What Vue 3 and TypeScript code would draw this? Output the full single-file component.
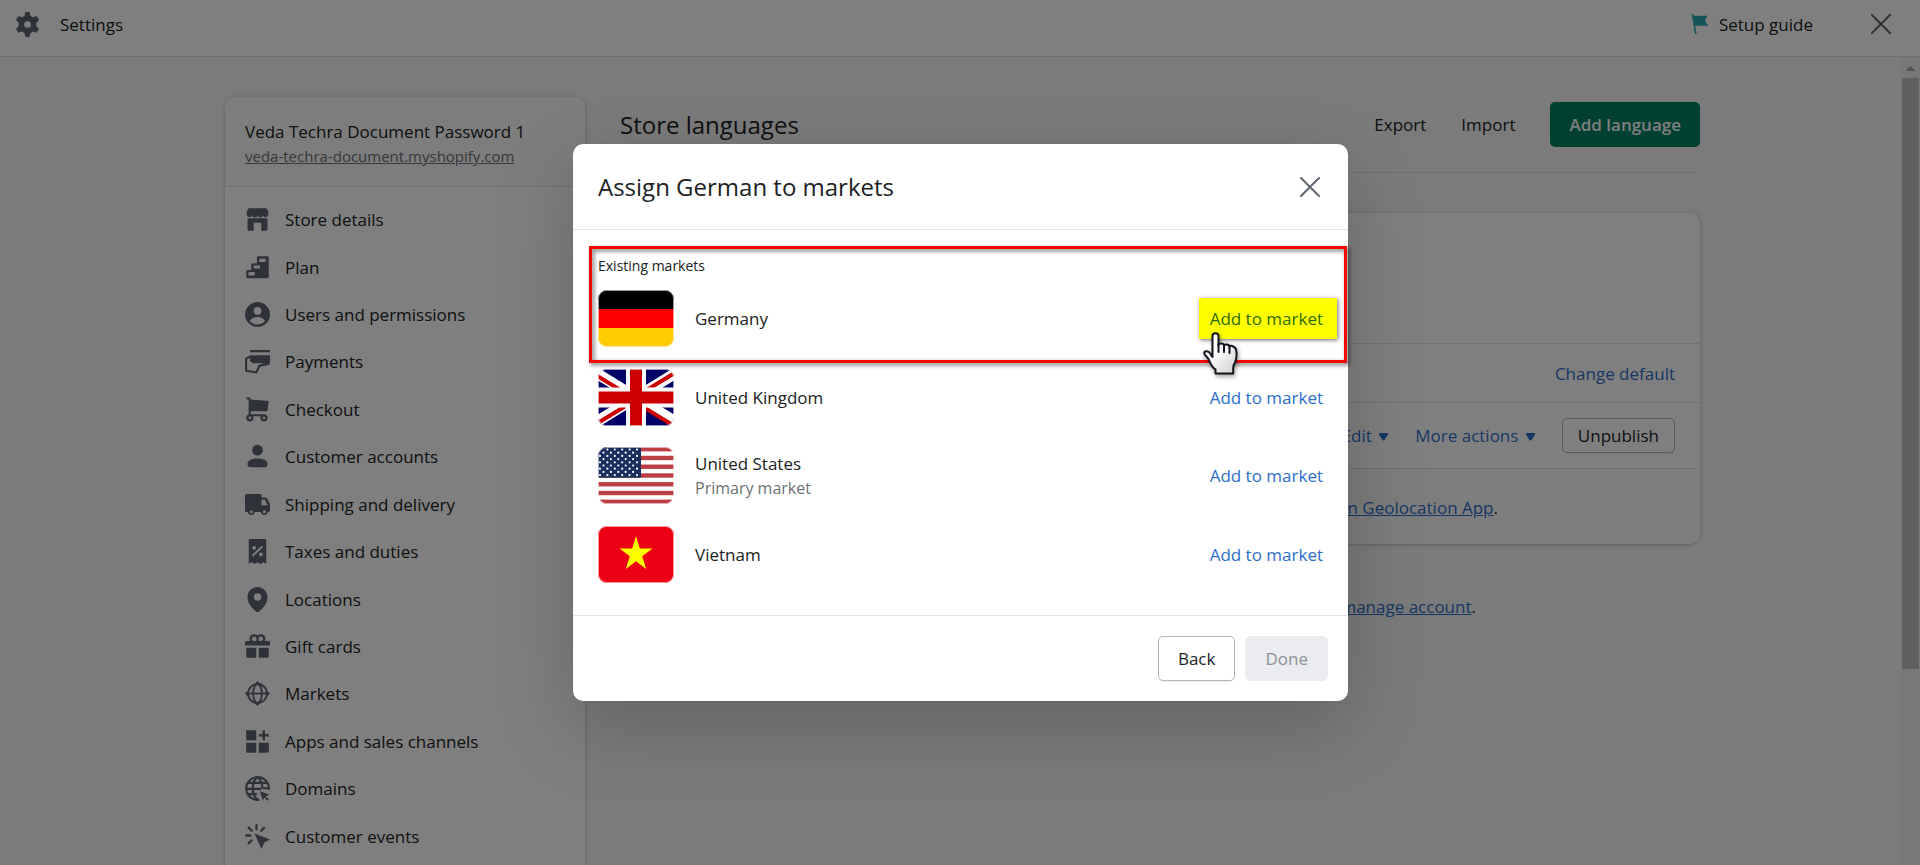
<script setup lang="ts">
import { ref } from 'vue'

interface NavItem {
  label: string
  icon: string
}

interface Market {
  name: string
  note?: string
  flag: 'de' | 'gb' | 'us' | 'vn'
}

const navItems: NavItem[] = [
  {
    label: 'Store details',
    icon: '<path d="M3 1h14l1.7 2.6v2.2a2.1 2.1 0 0 1-4.3.3 2.2 2.2 0 0 1-4.4 0 2.2 2.2 0 0 1-4.4 0 2.1 2.1 0 0 1-4.3-.3V3.600z"/><path d="M2 9h16v9a1 1 0 0 1-1 1h-4v-6.500H7V19H3a1 1 0 0 1-1-1z"/>',
  },
  {
    label: 'Plan',
    icon: '<path fill-rule="evenodd" d="M10.500 1H18a1 1 0 0 1 1 1v15.500a1 1 0 0 1-1 1H2a1 1 0 0 1-1-1V13a1 1 0 0 1 1-1h3V7.500a1 1 0 0 1 1-1h3.500V2a1 1 0 0 1 1-1zM11.500 3v2.500h5V3zM7 8.300v2.500h5V8.300zM2.700 13.700v2.600h5v-2.600z"/>',
  },
  {
    label: 'Users and permissions',
    icon: '<path fill-rule="evenodd" d="M10 0a10 10 0 1 0 0 20 10 10 0 0 0 0-20zm0 4a3 3 0 1 1 0 6.200A3 3 0 0 1 10 4zM4 15.200c1.100-2 3.400-3.200 6-3.200s4.900 1.200 6 3.200c-1.500 1.800-3.600 2.800-6 2.800s-4.500-1-6-2.800z"/>',
  },
  {
    label: 'Payments',
    icon: '<path d="M5 .7h14a1 1 0 0 1 1 1v.8H4v-.8a1 1 0 0 1 1-1zM4 5h16v5.500c0 1.400-1 2.500-2.300 2.500H15V9.500H4z"/><path d="M4.500 5.800.9 7.800v9.600l8.300 1.300 2.200-5.200 5.600-1.400c.7-.2.8-1.600 0-1.600H6.500L4.500 9" fill="none" stroke="currentColor" stroke-width="1.700" stroke-linejoin="round"/>',
  },
  {
    label: 'Checkout',
    icon: '<path d="M1.200.2h1.500C3.900.2 4.600 1 4.600 2L19 3.200l-.9 7.300a1 1 0 0 1-1 .8H4.600v2.400H16v1.600H2.900V2.600c0-.5-.3-.7-.8-.7h-.9z"/><path fill-rule="evenodd" d="M3.900 13.700a2.900 2.900 0 1 0 0 5.800 2.900 2.900 0 0 0 0-5.800zm0 1.800a1.100 1.100 0 1 1 0 2.200 1.100 1.100 0 0 1 0-2.200zM15.200 13.700a2.900 2.900 0 1 0 0 5.800 2.900 2.900 0 0 0 0-5.800zm0 1.800a1.100 1.100 0 1 1 0 2.200 1.100 1.100 0 0 1 0-2.200z"/>',
  },
  {
    label: 'Customer accounts',
    icon: '<circle cx="10" cy="4.900" r="4.300"/><path d="M2 16c0-3 4-4.400 8-4.400s8 1.400 8 4.400c0 2-1 2.600-2 2.600H4c-1 0-2-.6-2-2.600z"/>',
  },
  {
    label: 'Shipping and delivery',
    icon: '<path fill-rule="evenodd" d="M1.200 1.500H12a1.200 1.200 0 0 1 1.200 1.200v1.600h3.300c.5 0 .9.300 1.200.7l2 4c.2.400.3.800.3 1.200v4.300a1.500 1.500 0 0 1-1.500 1.500h-.3a2.800 2.800 0 0 1-5.500 0H7.800a2.800 2.800 0 0 1-5.500 0H1.200A1.200 1.200 0 0 1 0 14.800V2.700a1.200 1.200 0 0 1 1.200-1.200zM13.200 6.200v4.300h4.700L16 6.200zM5 14.500a1.200 1.200 0 1 0 0 2.400 1.200 1.200 0 0 0 0-2.400zm10.500 0a1.200 1.200 0 1 0 0 2.400 1.200 1.200 0 0 0 0-2.400z"/>',
  },
  {
    label: 'Taxes and duties',
    icon: '<path d="M4 0h12a1 1 0 0 1 1 1v19l-2.200-1.500-2.400 1.500-2.400-1.500L7.600 20l-2.400-1.500L3 20V1a1 1 0 0 1 1-1z"/><path d="m6.500 13 7-6.700" stroke="#fff" stroke-width="1.500" stroke-linecap="round"/><circle cx="7.300" cy="7" r="1.500" fill="#fff"/><circle cx="12.700" cy="12.300" r="1.500" fill="#fff"/>',
  },
  {
    label: 'Locations',
    icon: '<path fill-rule="evenodd" d="M10 0C5.400 0 2 3.600 2 8.200 2 12.500 5 16.500 8.700 19.500c.9.700 1.700.7 2.600 0C15 16.500 18 12.500 18 8.200 18 3.600 14.600 0 10 0zm0 5a3 3 0 1 1 0 6 3 3 0 0 1 0-6z"/>',
  },
  {
    label: 'Gift cards',
    icon: '<path d="M.8 5.500h18.400a.8.8 0 0 1 .8.800v2.900H0V6.300a.8.8 0 0 1 .8-.8zM1 11h8v8H2a1 1 0 0 1-1-1zM11 11h8v7a1 1 0 0 1-1 1h-7z"/><path d="M10 6.500H7A2.700 2.700 0 1 1 10 3.600zM10 6.500h3a2.700 2.700 0 1 0-3-2.900z" fill="none" stroke="currentColor" stroke-width="1.800"/>',
  },
  {
    label: 'Markets',
    icon: '<g fill="none" stroke="currentColor" stroke-width="1.500"><circle cx="10" cy="10" r="7.600"/><ellipse cx="10" cy="10" rx="3.500" ry="7.600"/><path d="M1 10h18"/></g><path d="m10 0 3.200 3.200H6.800zM10 20l3.200-3.200H6.800zM0 10l3.200-3.200v6.400zM20 10l-3.200-3.200v6.400z"/>',
  },
  {
    label: 'Apps and sales channels',
    icon: '<path d="M2 .9h6a1 1 0 0 1 1 1V9H1.900a1 1 0 0 1-1-1V2a1 1 0 0 1 1.100-1.100zM.9 11H9v8H2a1 1 0 0 1-1.100-1zM11 11h8.100v7a1 1 0 0 1-1.100 1h-7zM14 1h2v3h3v2h-3v3h-2V6h-3V4h3z"/>',
  },
  {
    label: 'Domains',
    icon: '<g fill="none" stroke="currentColor" stroke-width="1.700"><path d="M19.100 11A9.100 9.100 0 1 0 11.500 19"/><path d="M1 10.300h12M2.300 5.500h15.400M2.300 14.500h7.200M10.500 19C7.500 17 6.200 13.800 6.200 10S7.300 3 10 1c2.700 2 3.900 5.200 3.900 9M19 9.800h-5"/></g><path d="m11.800 12 7.700 2.900-3 1.300 2.700 2.600-1 1-2.700-2.700-1.200 2.700z"/>',
  },
  {
    label: 'Customer events',
    icon: '<path d="M7.600 7.600 20 12.300l-4.600 2.500L13.200 20z"/><path d="M9.200.9v3.200M1 9.200h3.200M3 3l2.300 2.300M15.300 3 13 5.300M3 15.300 5.300 13" stroke="currentColor" stroke-width="1.900" stroke-linecap="round"/>',
  },
]

const markets: Market[] = [
  { name: 'Germany', flag: 'de' },
  { name: 'United Kingdom', flag: 'gb' },
  { name: 'United States', note: 'Primary market', flag: 'us' },
  { name: 'Vietnam', flag: 'vn' },
]

const stripes = [0, 2, 4, 6, 8, 10, 12]
const stars = Array.from({ length: 9 }, (_, row) =>
  Array.from({ length: row % 2 ? 5 : 6 }, (_, col) => ({
    x: (row % 2 ? 5.500 : 2) + col * 7.400,
    y: 2.500 + row * 3.200,
  })),
).flat()

const highlighted = ref('Germany')
</script>

<template>
  <div class="app">
    <header class="topbar">
      <svg class="gear" viewBox="0 0 24 24" aria-hidden="true">
        <path
          fill-rule="evenodd"
          d="M10 0h4l.8 3.700 2.400 1.300 3.600-1.200 2.200 3.700-1 1.500-1.500 1.500v3l2.500 2.500-2.200 4-3.600-1.200-2.400 1.500L14 24h-4l-.8-3.700-2.400-1.500L3.200 20 1 16l2.500-2.500v-3L1 7.500l2.200-3.700L6.800 5l2.400-1.300zM12 8.800a3.200 3.200 0 1 0 0 6.400 3.200 3.200 0 0 0 0-6.400z"
        />
      </svg>
      <span class="topbar-title">Settings</span>
      <button class="guide" type="button">
        <svg class="guide-flag" viewBox="0 0 20 24" aria-hidden="true">
          <path d="M0 0h2l.3 2H19l-3 6 4 6H4.200L6 24H4z" />
        </svg>
        Setup guide
      </button>
      <button class="close" type="button" aria-label="Close settings">
        <svg viewBox="0 0 20 20" aria-hidden="true"><path d="m1 1 18 18M19 1 1 19" /></svg>
      </button>
    </header>

    <div class="body">
      <div class="page">
        <aside class="sidebar">
          <div class="store">
            <span class="store-name">Veda Techra Document Password 1</span>
            <a class="store-url" href="#">veda-techra-document.myshopify.com</a>
          </div>
          <nav class="nav">
            <a v-for="item in navItems" :key="item.label" class="nav-item" href="#">
              <svg class="nav-icon" viewBox="0 0 20 20" aria-hidden="true" v-html="item.icon"></svg>
              {{ item.label }}
            </a>
          </nav>
        </aside>

        <main class="content">
          <div class="heading">
            <h1>Store languages</h1>
            <div class="heading-actions">
              <button class="plain" type="button">Export</button>
              <button class="plain" type="button">Import</button>
              <button class="primary" type="button">Add language</button>
            </div>
          </div>
          <section class="card">
            <div class="card-intro"></div>
            <div class="card-row card-row-default"><button class="link" type="button">Change default</button></div>
            <div class="card-row card-row-actions">
              <button class="link" type="button">
                Edit <svg class="caret" viewBox="0 0 10 8" aria-hidden="true"><path d="M1 0h8q1 0 .5 1.500L6 7q-1 1-2 0L.5 1.500Q0 0 1 0z" /></svg>
              </button>
              <button class="link" type="button">
                More actions <svg class="caret" viewBox="0 0 10 8" aria-hidden="true"><path d="M1 0h8q1 0 .5 1.500L6 7q-1 1-2 0L.5 1.500Q0 0 1 0z" /></svg>
              </button>
              <button class="outline small" type="button">Unpublish</button>
            </div>
            <p class="card-note"><a href="#">n Geolocation App</a>.</p>
          </section>
          <p class="help"><a href="#">manage account</a>.</p>
        </main>
      </div>
      <div class="scrollbar" aria-hidden="true">
        <span class="scroll-arrow"></span>
        <span class="scroll-thumb"></span>
      </div>
    </div>

    <div class="overlay">
      <section class="modal" role="dialog" aria-modal="true" aria-labelledby="modal-title">
        <header class="modal-head">
          <h2 id="modal-title">Assign German to markets</h2>
          <button class="close" type="button" aria-label="Close dialog">
            <svg viewBox="0 0 20 20" aria-hidden="true"><path d="m1 1 18 18M19 1 1 19" /></svg>
          </button>
        </header>
        <div class="modal-body">
          <h3>Existing markets</h3>
          <ul class="markets">
            <li v-for="market in markets" :key="market.name" class="market">
              <svg class="flag" viewBox="0 0 76 57" preserveAspectRatio="none" aria-hidden="true">
                <g v-if="market.flag === 'de'">
                  <rect width="76" height="19" fill="#000" />
                  <rect y="19" width="76" height="19" fill="#f00" />
                  <rect y="38" width="76" height="19" fill="#fc0" />
                </g>
                <g v-else-if="market.flag === 'gb'">
                  <rect width="76" height="57" fill="#006" />
                  <path d="M-10 -1 86 58M86 -1-10 58" stroke="#fff" stroke-width="11" />
                  <path d="M-19 -8 38 27M38 30 95 65" stroke="#c00" stroke-width="4" transform="translate(-1 3)" />
                  <path d="M95 -8 38 27M38 30-19 65" stroke="#c00" stroke-width="4" transform="translate(1 0)" />
                  <path d="M38 0v57M0 28.500h76" stroke="#fff" stroke-width="20" />
                  <path d="M38 0v57M0 28.500h76" stroke="#c00" stroke-width="12" />
                </g>
                <g v-else-if="market.flag === 'us'">
                  <rect width="76" height="57" fill="#fff" />
                  <rect v-for="n in stripes" :key="n" :y="(n * 57) / 13" width="76" :height="57 / 13" fill="#bd3d44" />
                  <rect width="43" height="30.700" fill="#192f5d" />
                  <circle v-for="(star, i) in stars" :key="i" :cx="star.x" :cy="star.y" r="1.100" fill="#fff" />
                </g>
                <g v-else>
                  <rect width="76" height="57" fill="#ec0015" />
                  <path
                    fill="#ff0"
                    d="m38 10 3.800 12.500H54.500l-10.300 7.700 4 12.800L38 35.300 27.800 43l4-12.800-10.300-7.700h12.700z"
                  />
                </g>
                <rect x=".5" y=".5" width="75" height="56" rx="8" fill="none" stroke="#fff" stroke-opacity=".6" />
              </svg>
              <div class="market-text">
                <span class="market-name">{{ market.name }}</span>
                <span v-if="market.note" class="market-note">{{ market.note }}</span>
              </div>
              <button class="add" :class="{ marked: market.name === highlighted }" type="button">Add to market</button>
            </li>
          </ul>
          <div class="frame" aria-hidden="true"></div>
          <svg class="pointer" viewBox="0 0 36 45" aria-hidden="true">
            <defs>
              <linearGradient id="glove" x1="0" y1="0" x2="1" y2="1">
                <stop offset=".4" stop-color="#fff" />
                <stop offset="1" stop-color="#ccc" />
              </linearGradient>
            </defs>
            <path
              fill="url(#glove)"
              stroke="#14141f"
              stroke-width="2"
              stroke-linejoin="round"
              d="M9.500 25V4q0-2.700 3-2.700t3 2.700v9q0-1.500 2.500-1.500 3 0 3 2.300 0-1.500 2.700-1.300 2.800.2 2.800 2.300 0-1.100 2.500-.9 4.500 1 4.500 7 .3 5-1.300 9-2 3.500-2 5.500v6H12.500v-4Q9 35.500 7 30q-1-3-4-6-2.500-2.500-1.500-4Q3 18.300 6 20z"
            />
            <path d="M15.500 12v8M21 13v7M26.500 14v7" fill="none" stroke="#14141f" stroke-width="2" stroke-linecap="round" />
          </svg>
        </div>
        <footer class="modal-foot">
          <button class="outline" type="button">Back</button>
          <button class="outline done" type="button" disabled>Done</button>
        </footer>
      </section>
    </div>
  </div>
</template>

<style>
body {
  margin: 0;
}
</style>

<style scoped>
.app {
  --text: #202223;
  --icon: #5f6572;
  --line: #e1e3e5;
  --link: #2c6ecb;
  position: relative;
  display: flex;
  flex-direction: column;
  height: 100vh;
  overflow: hidden;
  background: #f6f6f7;
  color: var(--text);
  font-family: 'Segoe UI', 'Open Sans', 'Noto Sans', sans-serif;
  font-size: 17px;
  line-height: 25px;
}

.app * {
  box-sizing: border-box;
}

h1,
h2,
h3,
p,
ul {
  margin: 0;
  padding: 0;
  font-weight: 400;
}

button {
  padding: 0;
  border: 0;
  background: none;
  color: inherit;
  font: inherit;
  white-space: nowrap;
}

.topbar {
  display: flex;
  flex: none;
  align-items: center;
  height: 57px;
  padding: 0 29px 8px 15px;
  border-bottom: 1px solid #e1e1e1;
  background: #fff;
}

.gear {
  width: 25px;
  height: 25px;
  fill: var(--icon);
}

.topbar-title {
  margin-left: 20px;
  font-weight: 500;
}

.guide {
  display: flex;
  align-items: center;
  gap: 10px;
  margin-left: auto;
}

.guide-flag {
  width: 18px;
  height: 20px;
  fill: #2ba5b5;
}

.close {
  display: flex;
}

.close svg {
  width: 20px;
  height: 20px;
  fill: none;
  stroke: var(--icon);
  stroke-width: 2;
  stroke-linecap: round;
}

.topbar .close {
  margin-left: 58px;
}

.body {
  display: flex;
  flex: 1;
  min-height: 0;
}

.page {
  display: flex;
  flex: 1;
  gap: 35px;
  align-items: flex-start;
  padding: 40px 201px 0 225px;
}

.sidebar {
  flex: none;
  width: 360px;
  border-radius: 10px;
  overflow: hidden;
  background: #fff;
  box-shadow: 0 0 6px rgba(23, 24, 24, 0.1), 0 1px 3px rgba(0, 0, 0, 0.15);
}

.store {
  display: flex;
  flex-direction: column;
  height: 90px;
  padding: 22px 20px 0;
  border-bottom: 1px solid var(--line);
  background: #fafbfa;
}

.store-name {
  font-weight: 500;
}

.store-url {
  color: #6d7175;
  font-size: 15px;
}

.nav {
  display: grid;
  grid-auto-rows: 1fr;
  min-height: 664px;
  margin: 9px 0 40px;
}

.nav-item {
  display: flex;
  align-items: center;
  gap: 15px;
  padding: 0 20px;
  color: var(--text);
  font-weight: 500;
  text-decoration: none;
}

.nav-icon {
  width: 25px;
  height: 25px;
  color: var(--icon);
  fill: currentColor;
}

.content {
  flex: 1;
  min-width: 0;
}

.heading {
  display: flex;
  align-items: center;
  justify-content: space-between;
  height: 76px;
  padding-bottom: 20px;
  border-bottom: 1px solid #dcdee0;
}

h1,
h2 {
  font-size: 24px;
  line-height: 35px;
  font-weight: 500;
}

.heading-actions {
  display: flex;
  align-items: center;
  gap: 35px;
  font-weight: 500;
}

.primary {
  height: 45px;
  padding: 0 19px;
  border-radius: 5px;
  background: #008060;
  color: #fff;
  font-weight: 600;
}

.card {
  margin-top: 40px;
  border-radius: 10px;
  overflow: hidden;
  background: #fff;
  box-shadow: 0 0 6px rgba(23, 24, 24, 0.1), 0 1px 3px rgba(0, 0, 0, 0.15);
}

.card-intro {
  height: 130px;
}

.card-row {
  display: flex;
  align-items: center;
  justify-content: flex-end;
  gap: 26px;
  padding: 0 25px;
  border-top: 1px solid var(--line);
}

.card-row-default {
  height: 59px;
}

.card-row-actions {
  height: 66px;
}

.link {
  color: var(--link);
}

.caret {
  width: 11px;
  height: 8px;
  margin-left: 2px;
  fill: currentColor;
  vertical-align: middle;
}

.outline {
  height: 45px;
  padding: 0 19px;
  border: 1px solid #b0b5bc;
  border-radius: 5px;
  background: #fff;
  box-shadow: 0 1px 0 rgba(0, 0, 0, 0.05);
  font-weight: 500;
}

.outline.small {
  height: 35px;
  padding: 0 15px;
}

.card-note {
  height: 76px;
  padding: 26px 202px 0 0;
  border-top: 1px solid var(--line);
  background: #fafbfa;
  text-align: right;
}

.help {
  padding: 50px 224px 0 0;
  text-align: right;
}

.card-note a,
.help a {
  color: var(--link);
}

.scrollbar {
  display: flex;
  flex: none;
  flex-direction: column;
  align-items: center;
  gap: 7px;
  width: 19px;
  padding-top: 9px;
  background: #f1f1f1;
}

.scroll-arrow {
  width: 10px;
  height: 5px;
  background: #a3a3a3;
  clip-path: polygon(50% 0, 100% 100%, 0 100%);
}

.scroll-thumb {
  width: 17px;
  height: 591px;
  background: #c1c1c1;
}

.overlay {
  position: absolute;
  inset: 0;
  display: flex;
  align-items: flex-start;
  justify-content: center;
  padding: 144px 0 0 1px;
  background: rgba(0, 0, 0, 0.5);
}

.modal {
  width: 775px;
  border-radius: 10px;
  background: #fff;
  box-shadow: 0 26px 80px rgba(0, 0, 0, 0.2), 0 0 1px rgba(0, 0, 0, 0.2);
}

.modal-head {
  display: flex;
  align-items: center;
  justify-content: space-between;
  height: 86px;
  padding: 0 28px 0 25px;
  border-bottom: 1px solid var(--line);
}

.modal-body {
  position: relative;
  padding: 24px 25px 21px;
}

h3 {
  padding-bottom: 2px;
  font-size: 14px;
  line-height: 23px;
}

.markets {
  display: grid;
  grid-auto-rows: 1fr;
  min-height: 315px;
  list-style: none;
}

.market {
  display: flex;
  align-items: center;
}

.flag {
  width: 76px;
  height: 57px;
  border-radius: 9px;
}

.market-text {
  display: flex;
  flex: 1;
  flex-direction: column;
  margin-left: 21px;
}

.market-note {
  color: #6d7175;
  font-size: 16px;
}

.add {
  height: 41px;
  margin-right: -14px;
  padding: 0 14px 0 11px;
  color: var(--link);
}

.add.marked {
  background: #ff0;
  box-shadow: 1px 1px 4px rgba(0, 0, 0, 0.6);
  color: #2c6e00;
}

.frame {
  position: absolute;
  top: 16px;
  right: 1px;
  left: 16px;
  height: 117px;
  border: 3px solid #f00;
  filter: drop-shadow(2px 2px 2px rgba(0, 0, 0, 0.6));
  pointer-events: none;
}

.pointer {
  position: absolute;
  top: 102px;
  right: 109px;
  width: 36px;
  height: 45px;
  filter: drop-shadow(1px 2px 2px rgba(0, 0, 0, 0.4));
  pointer-events: none;
}

.modal-foot {
  display: flex;
  justify-content: flex-end;
  gap: 10px;
  padding: 20px;
  border-top: 1px solid var(--line);
}

.done {
  border-color: #ebecf0;
  background: #ebecf0;
  box-shadow: none;
  color: #8c9196;
}
</style>
